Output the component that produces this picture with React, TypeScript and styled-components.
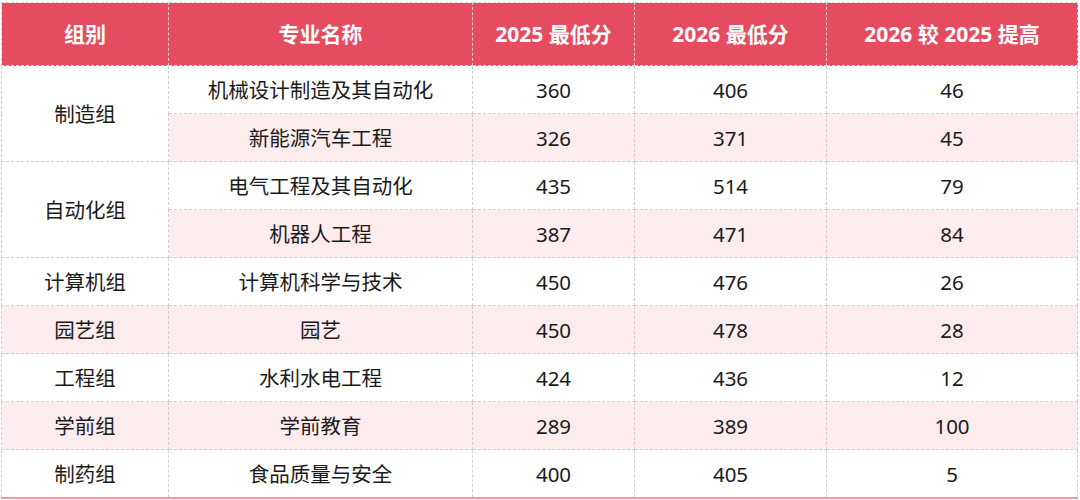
import React from "react";
import styled, { createGlobalStyle } from "styled-components";

const Global = createGlobalStyle`
  html, body { margin: 0; padding: 0; background: #ffffff; }
  body { font-family: "Noto Sans", "Noto Sans CJK SC", sans-serif; }
`;

const Wrap = styled.div`
  padding: 2px 3px 0 1px;
`;

const Table = styled.table`
  width: 1076px;
  border-collapse: collapse;
  table-layout: fixed;
  border-bottom: 2px solid #f29aa4;
`;

const Th = styled.th`
  height: 62px;
  padding: 0;
  background: #e64c5f;
  color: #ffffff;
  font-size: 21px;
  line-height: 24px;
  font-weight: 700;
  text-align: center;
  border: 1px dashed #d5d5d5;
`;

const Td = styled.td<{ $pink?: boolean }>`
  height: 47px;
  padding: 0;
  background: ${(p) => (p.$pink ? "#fcecee" : "#ffffff")};
  color: #1a1a1a;
  font-size: 20.5px;
  line-height: 24px;
  text-align: center;
  border: 1px dashed #cfcfcf;
`;

type Row = { major: string; a: number; b: number; d: number };
type Group = { name: string; rows: Row[]; pink?: boolean };

const groups: Group[] = [
  {
    name: "制造组",
    rows: [
      { major: "机械设计制造及其自动化", a: 360, b: 406, d: 46 },
      { major: "新能源汽车工程", a: 326, b: 371, d: 45 },
    ],
  },
  {
    name: "自动化组",
    rows: [
      { major: "电气工程及其自动化", a: 435, b: 514, d: 79 },
      { major: "机器人工程", a: 387, b: 471, d: 84 },
    ],
  },
  { name: "计算机组", rows: [{ major: "计算机科学与技术", a: 450, b: 476, d: 26 }] },
  { name: "园艺组", pink: true, rows: [{ major: "园艺", a: 450, b: 478, d: 28 }] },
  { name: "工程组", rows: [{ major: "水利水电工程", a: 424, b: 436, d: 12 }] },
  { name: "学前组", pink: true, rows: [{ major: "学前教育", a: 289, b: 389, d: 100 }] },
  { name: "制药组", rows: [{ major: "食品质量与安全", a: 400, b: 405, d: 5 }] },
];

export default function App() {
  return (
    <Wrap>
      <Global />
      <Table>
        <colgroup>
          <col style={{ width: 167 }} />
          <col style={{ width: 304 }} />
          <col style={{ width: 162 }} />
          <col style={{ width: 192 }} />
          <col style={{ width: 251 }} />
        </colgroup>
        <thead>
          <tr>
            <Th>组别</Th>
            <Th>专业名称</Th>
            <Th>2025 最低分</Th>
            <Th>2026 最低分</Th>
            <Th>2026 较 2025 提高</Th>
          </tr>
        </thead>
        <tbody>
          {groups.map((g) =>
            g.rows.map((r, i) => {
              const pink = g.rows.length > 1 ? i === 1 : !!g.pink;
              return (
                <tr key={g.name + r.major}>
                  {i === 0 && (
                    <Td rowSpan={g.rows.length} $pink={g.rows.length === 1 && !!g.pink}>
                      {g.name}
                    </Td>
                  )}
                  <Td $pink={pink}>{r.major}</Td>
                  <Td $pink={pink}>{r.a}</Td>
                  <Td $pink={pink}>{r.b}</Td>
                  <Td $pink={pink}>{r.d}</Td>
                </tr>
              );
            })
          )}
        </tbody>
      </Table>
    </Wrap>
  );
}
